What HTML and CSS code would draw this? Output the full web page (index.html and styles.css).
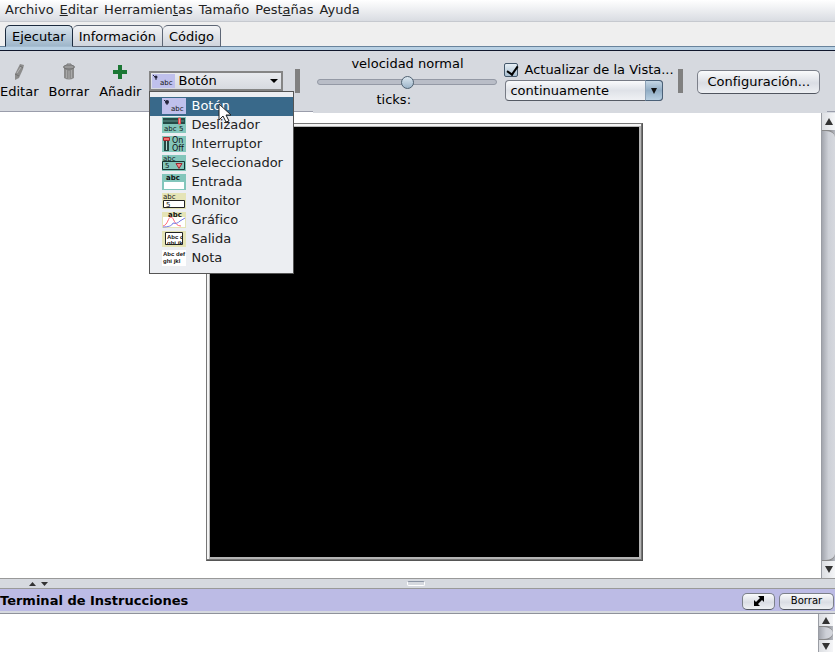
FILE: index.html
```html
<!DOCTYPE html>
<html lang="es">
<head>
<meta charset="utf-8">
<title>Ejecutar</title>
<link rel="stylesheet" href="styles.css">
</head>
<body>
<nav class="menubar">
  <a href="#">Archivo</a>
  <a href="#"><u>E</u>ditar</a>
  <a href="#">Herramien<u>t</u>as</a>
  <a href="#">Tamaño</a>
  <a href="#">Pest<u>a</u>ñas</a>
  <a href="#">Ayuda</a>
</nav>
<div class="tabs">
  <button class="tab selected">Ejecutar</button>
  <button class="tab">Información</button>
  <button class="tab">Código</button>
</div>
<header class="toolbar">
  <div class="tools">
    <button class="tool">
      <svg width="16" height="18" viewBox="0 0 16 18"><path d="M9 1l4 1-1 4-4 9-4 2 0-6z" fill="#8c8c8c"/><path d="M9 3l3 2M4 11l4 2" stroke="#707070" fill="none"/><path d="M6 10l4-6" stroke="#b5b5b5"/></svg>
      <span>Editar</span>
    </button>
    <button class="tool">
      <svg width="16" height="18" viewBox="0 0 16 18"><path d="M3 4h10v11q-5 3-10 0z" fill="#8b8b8b"/><ellipse cx="8" cy="4" rx="5.500" ry="2" fill="#999" stroke="#6e6e6e"/><path d="M6 2V1h4v1" fill="none" stroke="#777"/><path d="M5.500 7v8M8 8v8M10.500 7v8" stroke="#a9a9a9"/></svg>
      <span>Borrar</span>
    </button>
    <button class="tool">
      <svg width="16" height="18" viewBox="0 0 16 18"><path d="M6 2h4v5h5v4h-5v5H6v-5H1V7h5z" fill="#1b7734"/></svg>
      <span>Añadir</span>
    </button>
  </div>
  <div class="widget-picker">
    <select class="picker" aria-label="Elemento"><option>Botón</option></select>
    <svg class="picker-icon" width="23" height="14" viewBox="0 0 23 14"><path d="M0 0h23v14H0z" fill="#bfc0ec"/><circle cx="4" cy="3" r="1.500" fill="#24243c"/><path d="M1 1l2 2M4 4v2" stroke="#24243c"/><text x="8" y="11" class="tiny">abc</text></svg>
    <ul class="popup">
      <li class="active"><svg width="24" height="16" viewBox="0 0 24 16"><path d="M0 0h24v16H0z" fill="#bfc0ec"/><circle cx="5" cy="4" r="2" fill="#24243c"/><path d="M2 2l2 2M5 5v2" stroke="#24243c"/><text x="9" y="13" class="tiny">abc</text></svg>Botón</li>
      <li><svg width="24" height="16" viewBox="0 0 24 16"><path d="M0 0h24v16H0z" fill="#83c6bb"/><path d="M1 1h22v6H1z" fill="#244b47"/><path d="M1 4h21" stroke="#609890"/><path d="M16.500 1h2v6h-2z" fill="#fb9b98" stroke="#e0484c"/><text x="2" y="14" class="tiny">abc</text><text x="17" y="14" class="tiny">5</text></svg>Deslizador</li>
      <li><svg width="24" height="16" viewBox="0 0 24 16"><path d="M0 0h24v16H0z" fill="#83c6bb"/><path d="M2 3h5v12H2z" fill="#254743"/><path d="M4.500 5v9" stroke="#b7dcd5"/><path d="M1.500 1.500h6v3h-6z" fill="#f66a6a" stroke="#a32930"/><text x="10" y="7" class="small">On</text><text x="10" y="15" class="small">Off</text></svg>Interruptor</li>
      <li><svg width="24" height="16" viewBox="0 0 24 16"><path d="M0 0h24v16H0z" fill="#83c6bb"/><path d="M.5 6.500h22v8H.5z" fill="none" stroke="#173733"/><text x="1" y="6" class="tiny">abc</text><text x="3" y="13" class="tiny">5</text><path d="M14 8.500h6l-3 5z" fill="#f3878d" stroke="#9c2830"/></svg>Seleccionador</li>
      <li><svg width="24" height="16" viewBox="0 0 24 16"><path d="M0 0h24v16H0z" fill="#83c6bb"/><path d="M2 8h20v7H2z" fill="#fff"/><text x="4" y="6" class="tiny bold">abc</text></svg>Entrada</li>
      <li><svg width="24" height="16" viewBox="0 0 24 16"><path d="M0 0h24v16H0z" fill="#e5e4b6"/><path d="M1.500 7.500h21v7h-21z" fill="#fff" stroke="#222"/><text x="1" y="6" class="tiny">abc</text><text x="4" y="14" class="tiny">5</text></svg>Monitor</li>
      <li><svg width="24" height="16" viewBox="0 0 24 16"><path d="M0 0h24v16H0z" fill="#e5e4b6"/><path d="M1 5h22v10H1z" fill="#fff"/><text x="6" y="5" class="tiny bold">abc</text><path d="M1 14C6 13 6 5 9 5s3 9 10 9" fill="none" stroke="#ff6575"/><path d="M1 15c5 0 9-1 10-4 3 1 5 0 7-2l5-3" fill="none" stroke="#7779e4"/></svg>Gráfico</li>
      <li><svg width="24" height="16" viewBox="0 0 24 16"><path d="M0 0h24v16H0z" fill="#e5e4b6"/><path d="M3.500 1.500h17v12h-17z" fill="#fff" stroke="#222"/><svg x="4" y="2" width="16" height="11"><text x="1" y="6" class="mini">Abc c</text><text x="1" y="12" class="mini">ghi jk</text></svg></svg>Salida</li>
      <li><svg width="24" height="16" viewBox="0 0 24 16"><path d="M0 0h24v16H0z" fill="#fff"/><text x="1" y="6" class="mini">Abc def</text><text x="1" y="13" class="mini">ghi jkl</text></svg>Nota</li>
    </ul>
    <svg class="pointer" width="16" height="22" viewBox="0 0 16 22"><path d="M1 1v16l4-4 3 6 3-1-3-6h5z" fill="#fff" stroke="#222"/></svg>
  </div>
  <span class="separator"></span>
  <div class="speed">
    <label for="speed">velocidad normal</label>
    <input id="speed" type="range" min="0" max="100" value="50">
    <span class="ticks">ticks:</span>
  </div>
  <div class="updates">
    <label><input type="checkbox" checked>Actualizar de la Vista...</label>
    <div class="combo">
      <select aria-label="Modo de actualización"><option>continuamente</option></select>
      <span class="combo-arrow"></span>
    </div>
  </div>
  <span class="separator"></span>
  <button class="push settings">Configuración...</button>
</header>
<main class="view">
  <div class="world"></div>
  <div class="scrollbar">
    <button class="arrow up" aria-label="Subir"></button>
    <span class="thumb"></span>
    <button class="arrow down" aria-label="Bajar"></button>
  </div>
</main>
<div class="divider">
  <svg width="20" height="6" viewBox="0 0 20 6"><path d="M0 5l3.500-4L7 5zM12 1h7l-3.500 4z" fill="#333"/></svg>
  <span class="grip"></span>
</div>
<section class="terminal">
  <div class="terminal-head">
    <h2>Terminal de Instrucciones</h2>
    <button class="push expand" aria-label="Cambiar posición"><svg width="10" height="10" viewBox="0 0 10 10"><path d="M4 0h6v6L8 4 4 8l2 2H0V4l2 2 4-4z" fill="#000"/></svg></button>
    <button class="push clear">Borrar</button>
  </div>
  <div class="terminal-body">
    <div class="scrollbar">
      <button class="arrow up" aria-label="Subir"></button>
      <span class="thumb"></span>
      <button class="arrow down" aria-label="Bajar"></button>
    </div>
  </div>
</section>
</body>
</html>
```
FILE: styles.css
```css
* { box-sizing: border-box; }
body {
  margin: 0;
  height: 100vh;
  display: flex;
  flex-direction: column;
  overflow: hidden;
  background: #d6d9df;
  color: #000;
  font: 13px/16px "DejaVu Sans", sans-serif;
}
button, select, input { font: inherit; color: inherit; margin: 0; }
button { padding: 0; border: 0; background: none; }

.menubar {
  display: flex;
  gap: 6px;
  height: 22px;
  padding: 2px 5px;
  border-bottom: 1px solid #c6c9cf;
  background: linear-gradient(#fff, #d9dce2);
}
.menubar a { color: #222; text-decoration: none; }

.tabs {
  display: flex;
  height: 29px;
  padding: 3px 5px 0;
  border-bottom: 1px solid #10172c;
  background: linear-gradient(#efefef 24px, #68839c 24px 25px, #b8d0e3 25px);
}
.tab {
  height: 22px;
  padding: 1px 6px 0;
  border: 1px solid #5d6675;
  border-left-width: 0;
  border-radius: 5px 5px 0 0;
  background: linear-gradient(#f3f4f6, #cfd4dc);
}
.tab.selected {
  border: 1px solid #1c2c3f;
  border-bottom-color: #a5bdd1;
  background: linear-gradient(#d9e4ed, #9eb6ca);
}

.toolbar {
  display: flex;
  align-items: flex-start;
  height: 62px;
  flex: none;
  background:
    linear-gradient(#9a9dab, #9a9dab) 0 60px / 313px 1px no-repeat,
    linear-gradient(#fff, #fff) 0 61px / 313px 1px no-repeat,
    linear-gradient(#9a9dab, #9a9dab) 100% 60px / 8px 1px no-repeat;
}
.tools { display: flex; gap: 10px; padding-top: 12px; }
.tool { display: flex; flex-direction: column; align-items: center; gap: 3px; }
.widget-picker { position: relative; width: 134px; margin: 20px 0 0 8px; }
.picker {
  appearance: none;
  display: block;
  width: 100%;
  height: 20px;
  padding: 0 0 0 27px;
  border: 2px solid #858585;
  border-radius: 0;
  background: linear-gradient(#e8eaee, #d7dae0);
}
.widget-picker::after {
  content: "";
  position: absolute;
  right: 5px;
  top: 8px;
  border: 4px solid transparent;
  border-top-color: #000;
  border-bottom: 0;
}
.picker-icon { position: absolute; left: 3px; top: 3px; }
.popup {
  position: absolute;
  z-index: 2;
  left: 0;
  top: 20px;
  width: 145px;
  margin: 0;
  padding: 5px 0 5px;
  border: 1px solid #555;
  background: #eceef2;
  list-style: none;
}
.popup li {
  display: flex;
  align-items: center;
  gap: 5px;
  height: 19px;
  padding: 0 0 1px 12px;
  color: #222;
}
.popup .active { background: #39698a; color: #fff; }
.pointer { position: absolute; z-index: 3; left: 69px; top: 32px; }
.tiny { font: 7px "DejaVu Sans", sans-serif; fill: #111; }
.small { font: 8px "DejaVu Sans", sans-serif; fill: #111; }
.mini { font: bold 6px "Liberation Sans", sans-serif; fill: #111; }
.bold { font-weight: bold; }
.separator { width: 5px; height: 24px; margin: 18px 0 0 12px; background: #808080; }

.speed { display: flex; flex-direction: column; width: 180px; margin: 5px 0 0 17px; }
.speed label { text-align: center; }
.speed input { appearance: none; width: 100%; height: 20px; background: none; }
.speed input::-webkit-slider-runnable-track {
  height: 6px;
  border: 1px solid #9499a5;
  border-radius: 3px;
  background: #b9bdc7;
}
.speed input::-webkit-slider-thumb {
  appearance: none;
  width: 13px;
  height: 13px;
  margin-top: -4px;
  border: 1px solid #4f6171;
  border-radius: 50%;
  background: linear-gradient(#dce7f0, #9db5c9);
}
.ticks { margin-left: 59px; }

.updates { width: 162px; margin: 10px 0 0 7px; }
.updates label { display: flex; align-items: center; gap: 6px; height: 18px; white-space: nowrap; }
.updates input {
  appearance: none;
  position: relative;
  flex: none;
  width: 14px;
  height: 14px;
  border: 1px solid #44586b;
  border-radius: 2px;
  background: linear-gradient(#e7eff5, #a9bfd1);
}
.updates input::after {
  content: "";
  position: absolute;
  left: 4px;
  top: 0;
  width: 5px;
  height: 9px;
  border: solid #000;
  border-width: 0 2px 2px 0;
  transform: rotate(35deg);
}
.combo { position: relative; width: 158px; margin: 1px 0 0 1px; }
.combo select {
  appearance: none;
  display: block;
  width: 100%;
  height: 21px;
  padding: 0 4px;
  border: 1px solid #777b85;
  border-bottom-color: #555a64;
  border-radius: 4px;
  background: linear-gradient(#fafbfc, #dfe2e8 50%, #eff1f4);
}
.combo-arrow {
  position: absolute;
  right: 0;
  top: 0;
  width: 18px;
  height: 21px;
  border: 1px solid #4b6178;
  border-left-color: #8ca1b5;
  border-radius: 0 4px 4px 0;
  background: linear-gradient(#c5d6e4, #91adc5 50%, #b8cfe1);
  pointer-events: none;
}
.combo-arrow::after {
  content: "";
  position: absolute;
  left: 5px;
  top: 7px;
  border: 3px solid transparent;
  border-top: 6px solid #111;
  border-bottom: 0;
}
.push {
  border: 1px solid #7c808a;
  border-bottom-color: #50555f;
  border-radius: 5px;
  background: linear-gradient(#fafbfc, #dadde4 55%, #eef0f3);
}
.settings { height: 24px; padding: 0 9px; margin: 19px 0 0 14px; white-space: nowrap; }

.view {
  display: flex;
  flex: 1;
  min-height: 0;
  background: #fff;
}
.world {
  flex: none;
  width: 437px;
  height: 438px;
  margin: 10px auto 0 206px;
  border: 1px solid;
  border-color: #777 #555 #555 #777;
  background: #000;
  box-shadow:
    inset -1px -1px #777,
    inset 2px 2px #f4f4f4,
    inset -3px -3px #b5b5b5,
    inset 3px 3px #b5b5b5;
}
.scrollbar {
  display: flex;
  flex-direction: column;
  width: 14px;
  background: linear-gradient(90deg, #555, #b5b8c0);
  border-left: 1px solid #9a9da4;
}
.arrow {
  display: flex;
  align-items: center;
  justify-content: center;
  flex: none;
  height: 17px;
  background: linear-gradient(90deg, #dcdee2, #f5f6f8);
}
.arrow::after { content: ""; border: 4px solid transparent; }
.up::after { border-top: 0; border-bottom: 7px solid #333; }
.down::after { border-bottom: 0; border-top: 7px solid #333; }
.thumb {
  flex: 1;
  border: solid #888;
  border-width: 1px 0;
  border-radius: 0 9px 9px 0 / 0 7px 7px 0;
  background: linear-gradient(90deg, #a3a6ae, #cdd0d7 50%, #d6d8de);
}

.divider {
  position: relative;
  display: flex;
  align-items: center;
  flex: none;
  height: 11px;
  padding-left: 29px;
  border: solid #999;
  border-width: 1px 0;
}
.grip {
  position: absolute;
  left: calc(50% - 11px);
  width: 18px;
  height: 5px;
  border: 1px solid #fff;
  border-top-color: #8c95a5;
  border-radius: 2px;
}
.terminal { flex: none; }
.terminal-head {
  display: flex;
  align-items: center;
  height: 25px;
  padding-right: 1px;
  border-bottom: 1px solid #8f929b;
  background: linear-gradient(#bcbbe5 22px, #d6d9df 22px);
}
.terminal-head h2 { margin: 0 auto 0 0; font-size: 13px; }
.expand { display: flex; align-items: center; justify-content: center; width: 33px; height: 17px; }
.clear { width: 55px; height: 17px; margin-left: 4px; font-size: 10px; line-height: 12px; }
.terminal-body { display: flex; justify-content: flex-end; height: 38px; padding-right: 2px; background: #fff; }
.terminal-body .scrollbar { width: 15px; }
.terminal-body .arrow { height: 12px; }
```
